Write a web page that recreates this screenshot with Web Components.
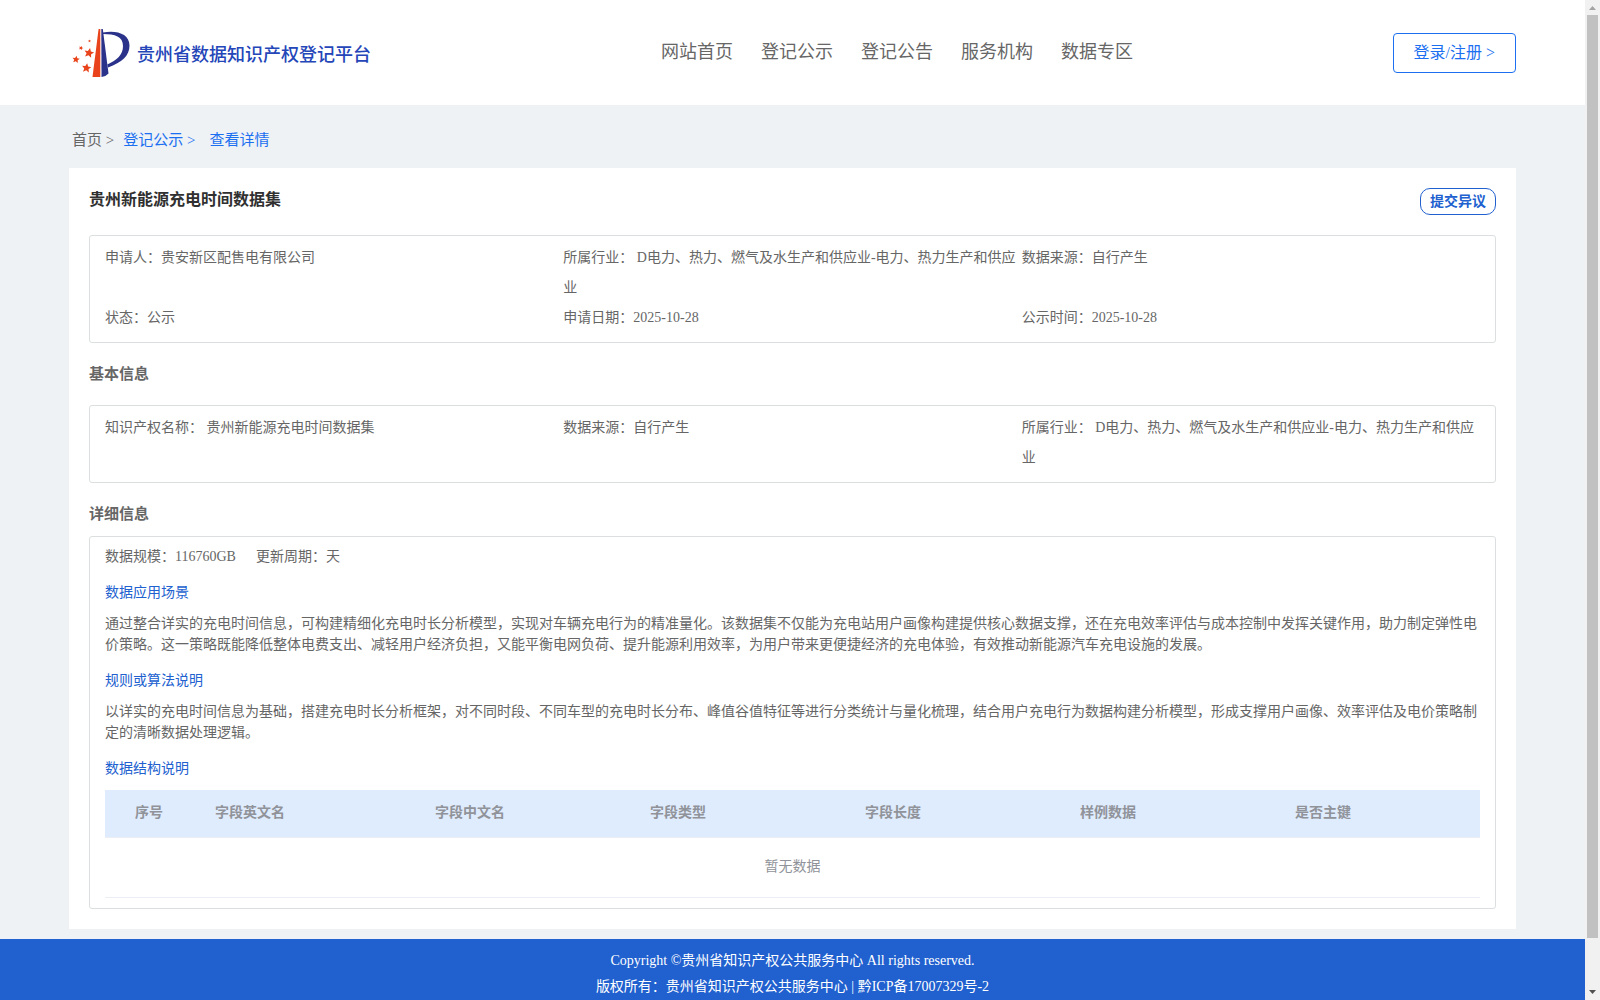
<!DOCTYPE html>
<html lang="zh-CN">
<head>
<meta charset="utf-8">
<title>贵州省数据知识产权登记平台</title>
<style>
  html, body {
    margin: 0;
    height: 100%;
    overflow: hidden;
  }
  body {
    font-family: "Liberation Serif", "Noto Sans CJK SC", serif;
    font-size: 14px;
    color: #666;
    --blue: #2060cf;
    --link: #1b6ff0;
    --line: #dcdfe0;
  }
</style>
</head>
<body>

<page-frame>
  <site-header slot="header"></site-header>

  <bread-crumb></bread-crumb>
  <detail-card heading="贵州新能源充电时间数据集">
    <info-box>
      <info-item>申请人：贵安新区配售电有限公司</info-item>
      <info-item>所属行业：&nbsp;D电力、热力、燃气及水生产和供应业-电力、热力生产和供应业</info-item>
      <info-item>数据来源：自行产生</info-item>
      <info-item>状态：公示</info-item>
      <info-item>申请日期：2025-10-28</info-item>
      <info-item>公示时间：2025-10-28</info-item>
    </info-box>

    <section-title style="--top: 11px; --bottom: 10px">基本信息</section-title>
    <info-box>
      <info-item>知识产权名称：&nbsp;贵州新能源充电时间数据集</info-item>
      <info-item>数据来源：自行产生</info-item>
      <info-item>所属行业：&nbsp;D电力、热力、燃气及水生产和供应业-电力、热力生产和供应业</info-item>
    </info-box>

    <section-title style="--top: 11px; --bottom: 1px">详细信息</section-title>
    <detail-box>
      <info-item slot="meta">数据规模：116760GB</info-item>
      <info-item slot="meta">更新周期：天</info-item>
      <text-block heading="数据应用场景">通过整合详实的充电时间信息，可构建精细化充电时长分析模型，实现对车辆充电行为的精准量化。该数据集不仅能为充电站用户画像构建提供核心数据支撑，还在充电效率评估与成本控制中发挥关键作用，助力制定弹性电价策略。这一策略既能降低整体电费支出、减轻用户经济负担，又能平衡电网负荷、提升能源利用效率，为用户带来更便捷经济的充电体验，有效推动新能源汽车充电设施的发展。</text-block>
      <text-block heading="规则或算法说明">以详实的充电时间信息为基础，搭建充电时长分析框架，对不同时段、不同车型的充电时长分布、峰值谷值特征等进行分类统计与量化梳理，结合用户充电行为数据构建分析模型，形成支撑用户画像、效率评估及电价策略制定的清晰数据处理逻辑。</text-block>
      <text-block heading="数据结构说明"></text-block>
      <field-table columns="序号,字段英文名,字段中文名,字段类型,字段长度,样例数据,是否主键"></field-table>
    </detail-box>
  </detail-card>

  <site-footer slot="footer"></site-footer>
</page-frame>

<script>
class PageFrame extends HTMLElement {
  constructor() {
    super()
    this.attachShadow({ mode: 'open' })
    this.shadowRoot.innerHTML = `
      <style>
        :host {
          display: flex;
          height: 1000px;
          width: 1600px;
          overflow: hidden;
        }
        .page {
          flex: 1;
          display: flex;
          flex-direction: column;
          background: #eef2f5;
        }
        main {
          height: 834px;
          flex: none;
          padding: 0 69px;
          box-sizing: border-box;
        }
      </style>
      <div class="page">
        <slot name="header"></slot>
        <main><slot></slot></main>
        <slot name="footer"></slot>
      </div>
      <scroll-track></scroll-track>
    `
  }
}

class ScrollTrack extends HTMLElement {
  constructor() {
    super()
    this.attachShadow({ mode: 'open' })
    this.shadowRoot.innerHTML = `
      <style>
        :host {
          display: flex;
          flex-direction: column;
          align-items: center;
          width: 15px;
          background: #f1f1f1;
        }
        svg { display: block; width: 15px; height: 15px; }
        .thumb { width: 11px; height: 923px; background: #c1c1c1; }
        .down { margin-top: auto; }
      </style>
      <svg viewBox="0 0 15 15"><path d="M4 10 L7.5 6 L11 10Z" fill="#a3a3a3"/></svg>
      <div class="thumb"></div>
      <svg class="down" viewBox="0 0 15 15"><path d="M4 5 L7.5 9 L11 5Z" fill="#505050"/></svg>
    `
  }
}

class SiteLogo extends HTMLElement {
  constructor() {
    super()
    this.attachShadow({ mode: 'open' })
    this.shadowRoot.innerHTML = `
      <style>
        :host {
          display: flex;
          align-items: center;
          font-size: 18px;
          font-weight: 500;
          color: #2446b8;
          white-space: nowrap;
        }
        svg { display: block; width: 66px; height: 58px; margin-right: 3px; }
      </style>
      <svg viewBox="0 0 66 58">
        <defs>
          <path id="star" d="M0 -5 L1.500 -1.800 L4.900 -1.600 L2.300 .8 L3.100 4.300 L0 2.400 L-3.100 4.300 L-2.300 .8 L-4.900 -1.600 L-1.500 -1.800Z"/>
        </defs>
        <path d="M30.600 5 H32.300 V53 H24.500Z" fill="#e8431a"/>
        <path d="M33.300 5 H34.800 L40.500 49.500 Q38 52.500 33.500 53Z" fill="#2a3289"/>
        <path d="M35 8.500 C49 6 61.500 10 61.500 21.500 C61.500 32 54 38 40 43.500 L39.300 40.500 C49 36 55 31 55 22 C55 12.500 47 10 35 10Z" fill="#2a3289"/>
        <g fill="#e8431a">
          <use href="#star" transform="translate(21 29) rotate(12)"/>
          <use href="#star" transform="translate(18.500 44) scale(.95) rotate(8)"/>
          <use href="#star" transform="translate(8 35.500) scale(.75) rotate(8)"/>
          <use href="#star" transform="translate(13 24) scale(.45) rotate(20)"/>
          <use href="#star" transform="translate(21.500 17) scale(.3)"/>
        </g>
      </svg>
      <span>贵州省数据知识产权登记平台</span>
    `
  }
}

class SiteHeader extends HTMLElement {
  constructor() {
    super()
    this.attachShadow({ mode: 'open' })
    this.shadowRoot.innerHTML = `
      <style>
        :host {
          display: grid;
          grid-template-columns: 593px 1fr auto;
          align-items: center;
          box-sizing: border-box;
          height: 105px;
          padding: 0 69px 0 68px;
          background: #fff;
        }
        nav {
          display: flex;
          gap: 28px;
          font-size: 18px;
          line-height: 26px;
          padding-bottom: 1px;
        }
        .login {
          border: 1px solid var(--link);
          border-radius: 4px;
          padding: 0 20px;
          font-size: 16px;
          line-height: 38px;
          color: var(--link);
        }
      </style>
      <site-logo></site-logo>
      <nav>
        <span>网站首页</span>
        <span>登记公示</span>
        <span>登记公告</span>
        <span>服务机构</span>
        <span>数据专区</span>
      </nav>
      <div class="login">登录/注册 &gt;</div>
    `
  }
}

class BreadCrumb extends HTMLElement {
  constructor() {
    super()
    this.attachShadow({ mode: 'open' })
    this.shadowRoot.innerHTML = `
      <style>
        :host {
          display: flex;
          height: 63px;
          padding: 0 3px;
          font-size: 15px;
          line-height: 70px;
        }
        a { color: var(--link); }
        .parent { margin: 0 14px 0 9px; }
      </style>
      <span>首页 &gt;</span>
      <a class="parent">登记公示 &gt;</a>
      <a>查看详情</a>
    `
  }
}

class DetailCard extends HTMLElement {
  constructor() {
    super()
    this.attachShadow({ mode: 'open' })
    this.shadowRoot.innerHTML = `
      <style>
        :host {
          display: block;
          box-sizing: border-box;
          height: 761px;
          padding: 20px;
          background: #fff;
        }
        header {
          display: flex;
          justify-content: space-between;
          align-items: flex-start;
          height: 47px;
        }
        h1 {
          margin: 0;
          font-size: 16px;
          line-height: 24px;
          color: #303030;
        }
        .objection {
          border: 1px solid var(--blue);
          border-radius: 10px;
          padding: 0 9px;
          font-weight: bold;
          line-height: 25px;
          color: var(--blue);
        }
      </style>
      <header>
        <h1>${this.getAttribute('heading')}</h1>
        <div class="objection">提交异议</div>
      </header>
      <slot></slot>
    `
  }
}

class SectionTitle extends HTMLElement {
  constructor() {
    super()
    this.attachShadow({ mode: 'open' })
    this.shadowRoot.innerHTML = `
      <style>
        :host {
          display: block;
          padding: var(--top) 0 var(--bottom);
          font-size: 15px;
          font-weight: bold;
          line-height: 41px;
        }
      </style>
      <slot></slot>
    `
  }
}

class InfoBox extends HTMLElement {
  constructor() {
    super()
    this.attachShadow({ mode: 'open' })
    this.shadowRoot.innerHTML = `
      <style>
        :host {
          display: grid;
          grid-template-columns: repeat(3, 1fr);
          border: 1px solid var(--line);
          border-radius: 3px;
          padding: 7px 15px 9px;
          line-height: 30px;
        }
      </style>
      <slot></slot>
    `
  }
}

class InfoItem extends HTMLElement {
  constructor() {
    super()
    this.attachShadow({ mode: 'open' })
    this.shadowRoot.innerHTML = `
      <style>:host { display: block; }</style>
      <slot></slot>
    `
  }
}

class DetailBox extends HTMLElement {
  constructor() {
    super()
    this.attachShadow({ mode: 'open' })
    this.shadowRoot.innerHTML = `
      <style>
        :host {
          display: block;
          box-sizing: border-box;
          height: 373px;
          border: 1px solid var(--line);
          border-radius: 3px;
          padding: 9px 15px;
        }
        .meta { display: flex; gap: 20px; line-height: 21px; }
      </style>
      <div class="meta"><slot name="meta"></slot></div>
      <slot></slot>
    `
  }
}

class TextBlock extends HTMLElement {
  constructor() {
    super()
    this.attachShadow({ mode: 'open' })
    this.shadowRoot.innerHTML = `
      <style>
        :host { display: block; line-height: 21px; padding-top: 15px; }
        h3 {
          margin: 0 0 10px;
          font-size: 14px;
          font-weight: normal;
          color: var(--blue);
        }
        p { margin: 0; }
      </style>
      <h3>${this.getAttribute('heading')}</h3>
      <p><slot></slot></p>
    `
  }
}

class FieldTable extends HTMLElement {
  constructor() {
    super()
    this.attachShadow({ mode: 'open' })
    const cells = this.getAttribute('columns').split(',').map(name => `<span>${name}</span>`).join('')
    this.shadowRoot.innerHTML = `
      <style>
        :host { display: block; margin-top: 11px; color: #909399; }
        .head {
          display: grid;
          grid-template-columns: 80px 220px 215px 215px 215px 215px 1fr;
          padding-left: 30px;
          font-weight: bold;
          line-height: 46px;
          height: 47px;
          background: #dfecfe;
          border-bottom: 1px solid #ebeef5;
        }
        .empty {
          text-align: center;
          line-height: 58px;
          height: 59px;
          border-bottom: 1px solid #ebeef5;
        }
      </style>
      <div class="head">${cells}</div>
      <div class="empty">暂无数据</div>
    `
  }
}

class SiteFooter extends HTMLElement {
  constructor() {
    super()
    this.attachShadow({ mode: 'open' })
    this.shadowRoot.innerHTML = `
      <style>
        :host {
          display: block;
          flex: 1;
          padding-top: 9px;
          background: var(--blue);
          color: #fff;
          text-align: center;
          line-height: 26px;
        }
      </style>
      <div>Copyright ©贵州省知识产权公共服务中心 All rights reserved.</div>
      <div>版权所有：贵州省知识产权公共服务中心 | 黔ICP备17007329号-2</div>
    `
  }
}

customElements.define('scroll-track', ScrollTrack)
customElements.define('page-frame', PageFrame)
customElements.define('site-logo', SiteLogo)
customElements.define('site-header', SiteHeader)
customElements.define('bread-crumb', BreadCrumb)
customElements.define('detail-card', DetailCard)
customElements.define('section-title', SectionTitle)
customElements.define('info-box', InfoBox)
customElements.define('info-item', InfoItem)
customElements.define('detail-box', DetailBox)
customElements.define('text-block', TextBlock)
customElements.define('field-table', FieldTable)
customElements.define('site-footer', SiteFooter)
</script>
</body>
</html>
